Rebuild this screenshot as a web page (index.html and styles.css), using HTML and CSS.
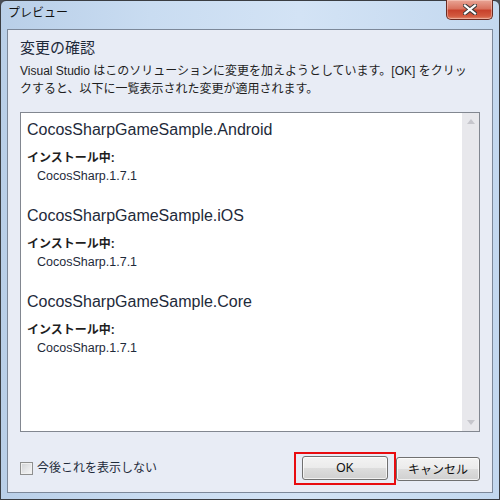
FILE: index.html
```html
<!DOCTYPE html>
<html lang="ja">
<head>
<meta charset="utf-8">
<link rel="stylesheet" href="styles.css">
</head>
<body>
<div class="window">
  <div class="titlebar">
    <div class="title">プレビュー</div>
    <div class="close">
      <svg width="14" height="11" viewBox="0 0 14 11">
        <path d="M2 1.5 L12 9.5 M12 1.5 L2 9.5" stroke="#3a3a3a" stroke-width="4.2" stroke-linecap="square"/>
        <path d="M2 1.5 L12 9.5 M12 1.5 L2 9.5" stroke="#ffffff" stroke-width="2.2" stroke-linecap="square"/>
      </svg>
    </div>
  </div>
  <div class="client">
    <h1 class="heading">変更の確認</h1>
    <p class="desc">Visual Studio はこのソリューションに変更を加えようとしています。[OK] をクリッ<br>クすると、以下に一覧表示された変更が適用されます。</p>
    <div class="listbox">
      <div class="list-content">
        <div class="item">
          <div class="proj">CocosSharpGameSample.Android</div>
          <div class="label">インストール中:</div>
          <div class="pkg">CocosSharp.1.7.1</div>
        </div>
        <div class="item">
          <div class="proj">CocosSharpGameSample.iOS</div>
          <div class="label">インストール中:</div>
          <div class="pkg">CocosSharp.1.7.1</div>
        </div>
        <div class="item">
          <div class="proj">CocosSharpGameSample.Core</div>
          <div class="label">インストール中:</div>
          <div class="pkg">CocosSharp.1.7.1</div>
        </div>
      </div>
      <div class="scrollbar">
        <span class="arrow up"></span>
        <span class="arrow down"></span>
      </div>
    </div>
    <div class="footer">
      <label class="check"><span class="box"></span><span>今後これを表示しない</span></label>
      <div class="buttons">
        <span class="highlight"><button class="btn ok">OK</button></span>
        <button class="btn cancel">キャンセル</button>
      </div>
    </div>
  </div>
</div>
</body>
</html>
```
FILE: styles.css
```css
* { box-sizing: border-box; }
html, body {
  margin: 0;
  padding: 0;
  background: #4a4f57;
}
body {
  width: 500px;
  height: 500px;
  font-family: "Liberation Sans", "Noto Sans CJK JP", sans-serif;
  color: #1e1e1e;
}
.window {
  width: 500px;
  height: 500px;
  border: 1px solid #3a3d42;
  border-radius: 6px 6px 0 0;
  background: linear-gradient(90deg, #b9cfe8 0%, #c9dcf1 30%, #d3e3f5 60%, #c3d8ef 100%);
  padding: 0 6px 6px;
  display: flex;
  flex-direction: column;
}
.titlebar {
  height: 28px;
  display: flex;
  align-items: flex-start;
  flex: none;
}
.title {
  font-size: 12px;
  line-height: 25px;
  padding-left: 1px;
  color: #111;
}
.close {
  margin-left: auto;
  margin-top: -1px;
  width: 47px;
  height: 20px;
  border: 1px solid #6a2b22;
  border-top: none;
  border-radius: 0 0 5px 5px;
  background: linear-gradient(#e9a596 0%, #d9735f 45%, #c8422c 55%, #d35a3f 85%, #e18a6e 100%);
  box-shadow: inset 0 0 0 1px rgba(255, 220, 210, 0.45);
  display: flex;
  align-items: center;
  justify-content: center;
}
.client {
  flex: 1;
  border: 1px solid #7c8899;
  background: #e8ecf5;
  padding: 8px 12px 0 12px;
  display: flex;
  flex-direction: column;
}
.heading {
  margin: 0 0 5px;
  font-size: 15px;
  line-height: 20px;
  font-weight: normal;
  color: #1e2a3a;
}
.desc {
  margin: 0;
  font-size: 12px;
  line-height: 17.5px;
  color: #1e1e1e;
}
.listbox {
  margin-top: 14px;
  height: 320px;
  border: 1px solid #828790;
  background: #fff;
  display: flex;
}
.list-content {
  flex: 1;
  padding: 7px 0 0 6px;
}
.item {
  padding-bottom: 20.5px;
}
.proj {
  font-size: 16px;
  line-height: 20px;
  margin-bottom: 9px;
  color: #1e2a3a;
}
.label {
  font-size: 12px;
  line-height: 18px;
  font-weight: bold;
  color: #1e1e1e;
}
.pkg {
  font-size: 12.5px;
  line-height: 18.5px;
  padding-left: 10px;
  color: #1e2a3a;
}
.scrollbar {
  width: 17px;
  background: #e8e8ec;
  display: flex;
  flex-direction: column;
  justify-content: space-between;
  align-items: center;
  padding: 6px 0 6px;
}
.arrow {
  width: 0;
  height: 0;
  border-left: 4.5px solid transparent;
  border-right: 4.5px solid transparent;
}
.arrow.up { border-bottom: 5px solid #c6c6cc; }
.arrow.down { border-top: 5px solid #c6c6cc; }
.footer {
  margin-top: 20px;
  display: flex;
  align-items: center;
  justify-content: space-between;
}
.check {
  display: flex;
  align-items: center;
  gap: 4px;
  font-size: 12px;
  line-height: 16px;
  color: #1e2a3a;
  margin-top: -1px;
}
.box {
  width: 13px;
  height: 13px;
  border: 1px solid #8e8f8f;
  background: linear-gradient(135deg, #cfd1d4 0%, #e4e5e7 50%, #f7f7f7 100%);
  box-shadow: inset 0 0 0 1px #f0f0f0;
}
.buttons {
  display: flex;
  align-items: center;
}
.highlight {
  display: block;
  border: 2px solid #e80c10;
  padding: 2px 6px 3px 6px;
}
.btn {
  display: block;
  height: 24px;
  margin: 0;
  padding: 0;
  border: 1px solid #707070;
  border-radius: 3px;
  background: linear-gradient(#f3f3f3 0%, #ebebeb 50%, #dddddd 51%, #d0d0d0 100%);
  box-shadow: inset 0 0 0 1px rgba(255, 255, 255, 0.7);
  font-family: "Liberation Sans", "Noto Sans CJK JP", sans-serif;
  font-size: 12px;
  color: #111;
}
.ok { width: 86px; }
.cancel { width: 84px; }
```
